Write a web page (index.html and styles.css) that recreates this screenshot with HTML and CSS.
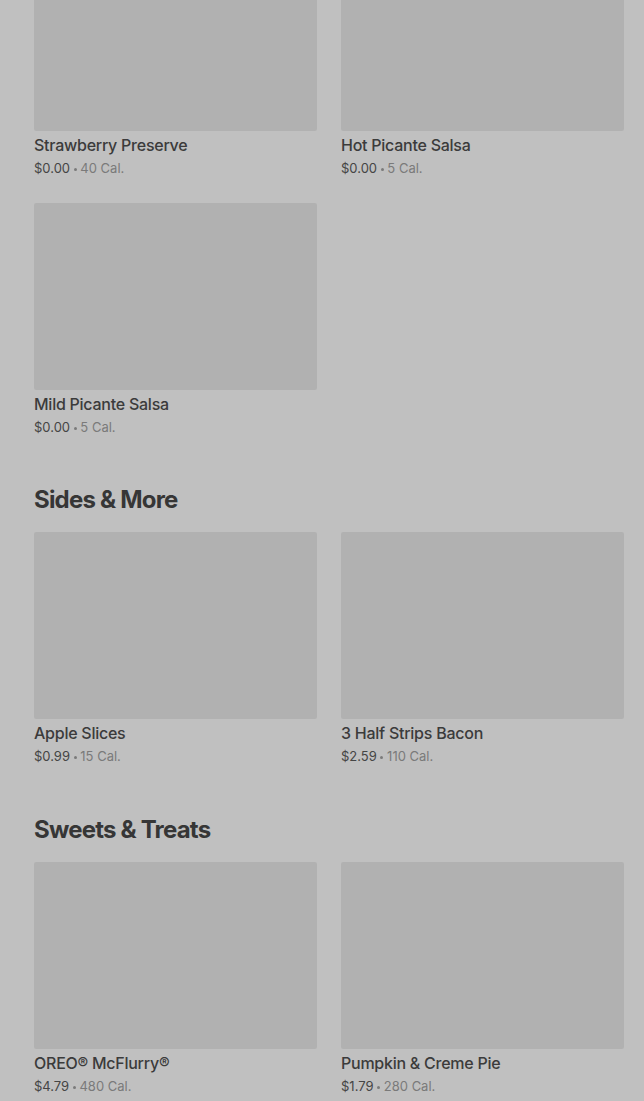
FILE: index.html
```html
<!DOCTYPE html>
<html lang="en">
<head>
    <meta charset="UTF-8">
    <meta name="viewport" content="width=device-width, initial-scale=1.0">
    <title>Menu</title>
    <link rel="stylesheet" href="styles.css">
</head>
<body>
    <div class="menu">
        <section class="section first">
            <div class="grid">
                <div class="card">
                    <div class="thumb"></div>
                    <h3 class="name">Strawberry Preserve</h3>
                    <p class="meta">$0.00 <span class="dot"></span> <span class="cal">40 Cal.</span></p>
                </div>
                <div class="card">
                    <div class="thumb"></div>
                    <h3 class="name">Hot Picante Salsa</h3>
                    <p class="meta">$0.00 <span class="dot"></span> <span class="cal">5 Cal.</span></p>
                </div>
                <div class="card">
                    <div class="thumb"></div>
                    <h3 class="name">Mild Picante Salsa</h3>
                    <p class="meta">$0.00 <span class="dot"></span> <span class="cal">5 Cal.</span></p>
                </div>
            </div>
        </section>

        <section class="section">
            <h2 class="title">Sides &amp; More</h2>
            <div class="grid">
                <div class="card">
                    <div class="thumb"></div>
                    <h3 class="name">Apple Slices</h3>
                    <p class="meta">$0.99 <span class="dot"></span> <span class="cal">15 Cal.</span></p>
                </div>
                <div class="card">
                    <div class="thumb"></div>
                    <h3 class="name">3 Half Strips Bacon</h3>
                    <p class="meta">$2.59 <span class="dot"></span> <span class="cal">110 Cal.</span></p>
                </div>
            </div>
        </section>

        <section class="section">
            <h2 class="title">Sweets &amp; Treats</h2>
            <div class="grid">
                <div class="card">
                    <div class="thumb"></div>
                    <h3 class="name">OREO® McFlurry®</h3>
                    <p class="meta">$4.79 <span class="dot"></span> <span class="cal">480 Cal.</span></p>
                </div>
                <div class="card">
                    <div class="thumb"></div>
                    <h3 class="name">Pumpkin &amp; Creme Pie</h3>
                    <p class="meta">$1.79 <span class="dot"></span> <span class="cal">280 Cal.</span></p>
                </div>
            </div>
        </section>
    </div>
</body>
</html>
```

FILE: styles.css
```css
* {
    margin: 0;
    padding: 0;
    box-sizing: border-box;
}

body {
    font-family: Inter, "Noto Sans", Arial, sans-serif;
    background-color: #c0c0c0;
    color: #3a3a3a;
    overflow: hidden;
}

.menu {
    padding: 0 20px 0 34px;
    margin-top: -56px;
}

.section {
    margin-bottom: 48px;
}

.section.first {
    margin-bottom: 47px;
}

.title {
    font-size: 24px;
    line-height: 32px;
    font-weight: 700;
    letter-spacing: -0.8px;
    color: #363636;
    margin-bottom: 16px;
}

.grid {
    display: grid;
    grid-template-columns: 283px 283px;
    column-gap: 24px;
    row-gap: 25px;
}

.thumb {
    height: 187px;
    background-color: #b1b1b1;
    border-radius: 2px;
}

.name {
    margin-top: 4px;
    font-size: 16px;
    line-height: 20px;
    font-weight: 500;
    letter-spacing: -0.25px;
    color: #3b3b3b;
}

.meta {
    margin-top: 4px;
    font-size: 13px;
    line-height: 19px;
    color: #454545;
}

.dot {
    display: inline-block;
    width: 3px;
    height: 3px;
    border-radius: 50%;
    background-color: #7a7a7a;
    vertical-align: middle;
}

.cal {
    color: #7a7a7a;
}
```
